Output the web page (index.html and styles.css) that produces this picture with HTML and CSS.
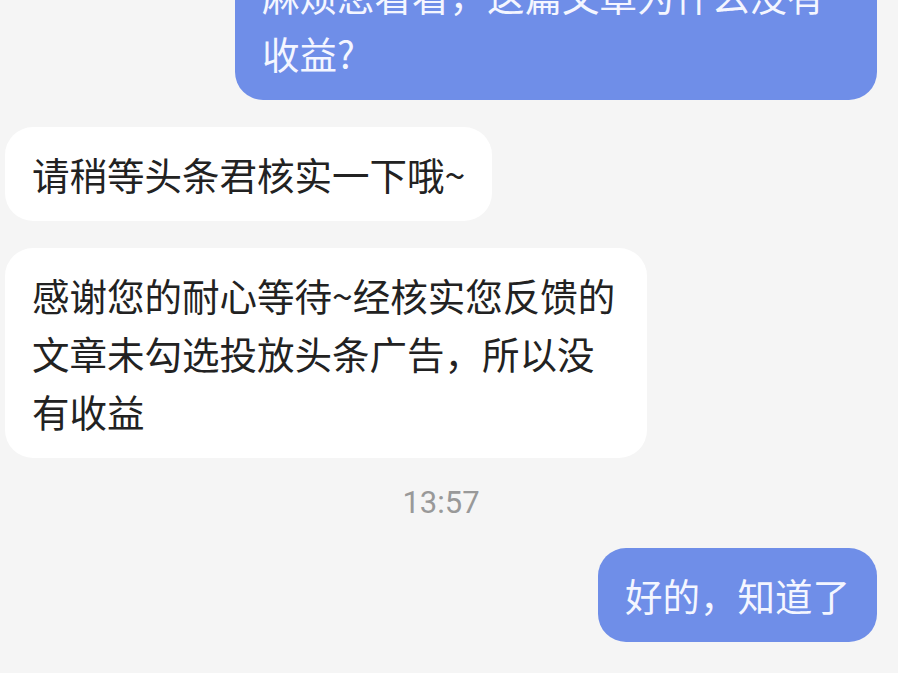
FILE: index.html
```
<html lang="zh-CN">

<head>
    <meta charset="UTF-8">
    <meta name="viewport" content="width=device-width, initial-scale=1.0">
    <title>消息</title>
    <link rel="stylesheet" href="styles.css">
</head>

<body>
    <div class="chat">
        <div class="msg mine">麻烦您看看，这篇文章为什么没有收益?</div>
        <div class="msg theirs">请稍等头条君核实一下哦~</div>
        <div class="msg theirs">感谢您的耐心等待~经核实您反馈的文章未勾选投放头条广告，所以没有收益</div>
        <div class="time">13:57</div>
        <div class="msg mine">好的，知道了</div>
    </div>
</body>

</html>
```

FILE: styles.css
```
body {
    margin: 0;
    padding: 0;
    background-color: #f5f5f5;
    font-family: "Noto Sans CJK SC", "Noto Sans", sans-serif;
    overflow: hidden;
}

.chat {
    display: flex;
    flex-direction: column;
    gap: 27px;
    margin-top: -52px;
    padding: 0 21px 0 5px;
}

.msg {
    font-size: 37.5px;
    line-height: 58px;
    padding: 18px 27px;
    border-radius: 28px;
    max-width: 642px;
    box-sizing: border-box;
    word-break: break-all;
}

.mine {
    align-self: flex-end;
    background-color: #6f8ee8;
    color: #f4f6ff;
}

.theirs {
    align-self: flex-start;
    background-color: #ffffff;
    color: #222222;
}

.time {
    align-self: center;
    font-family: Roboto, "Noto Sans", sans-serif;
    font-size: 31px;
    line-height: 36px;
    color: #999999;
}
```
